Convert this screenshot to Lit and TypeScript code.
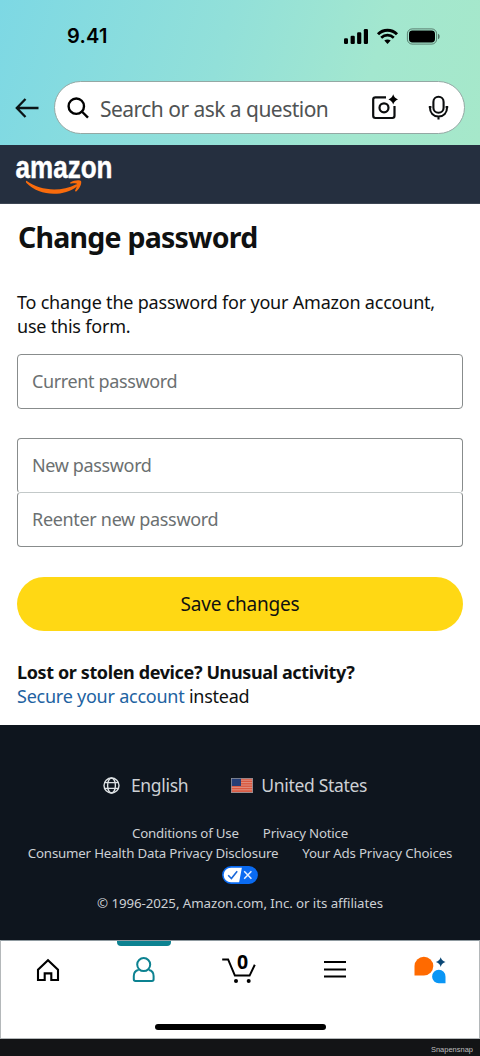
import { LitElement, html, css, svg } from "lit";
import { customElement, property } from "lit/decorators.js";

@customElement("status-bar")
class StatusBar extends LitElement {
  static styles = css`
    :host { display: flex; justify-content: space-between; align-items: center; height: 24px; padding: 24px 40px 0 67px; }
    .time { font: 600 20px/24px Inter, sans-serif; letter-spacing: 0.2px; }
    .icons { display: block; }
  `;
  render() {
    return html`
      <span class="time">9.41</span>
      <svg class="icons" width="97" height="17" viewBox="0 0 97 17">
        <rect x="1" y="10.2" width="4" height="5.8" rx="1.2" />
        <rect x="7.6" y="7.7" width="4.2" height="8.3" rx="1.2" />
        <rect x="14.1" y="4.3" width="4.2" height="11.7" rx="1.2" />
        <rect x="20.8" y="1" width="4.2" height="15" rx="1.2" />
        <path d="M35 6.2C40.4 .8 48.6 .8 54 6.2" fill="none" stroke="#000" stroke-width="3" />
        <path d="M38.2 9.8c3.7-3.5 8.9-3.5 12.6 0" fill="none" stroke="#000" stroke-width="2.7" />
        <path d="M44.5 16l-3.2-3.4c1.9-1.6 4.5-1.6 6.4 0z" />
        <rect x="64.4" y=".9" width="29.2" height="15.2" rx="4.8" fill="none" stroke="#000" stroke-opacity=".45" stroke-width="1" />
        <rect x="66" y="2.6" width="26" height="11.8" rx="3.4" />
        <path d="M95 5.8c2.2.8 2.2 4.6 0 5.4z" opacity=".5" />
      </svg>
    `;
  }
}

@customElement("search-header")
class SearchHeader extends LitElement {
  static styles = css`
    :host { display: flex; align-items: center; padding: 33px 15px 12px 15px; }
    .back { flex: none; margin: 1px 15px 0 0; }
    .pill { flex: 1; display: flex; align-items: center; box-sizing: border-box; height: 53px; border: 1px solid #94a8a4; border-radius: 27px; background: #fff; padding: 0 14px 0 11px; }
    .query { flex: 1; margin-left: 9px; color: #505354; font-size: 21px; line-height: 28px; letter-spacing: -0.53px; white-space: nowrap; padding-top: 2px; }
    .camera { margin: -2px 30px 0 0; }
    svg { display: block; flex: none; }
  `;
  render() {
    return html`
      <svg class="back" width="24" height="22" viewBox="0 0 24 22" fill="none" stroke="#0b1416" stroke-width="2.3">
        <path d="M10.5 2L1.8 11l8.7 9M2 11h21.5" />
      </svg>
      <div class="pill">
        <svg width="25" height="24" viewBox="0 0 25 24" fill="none" stroke="#000" stroke-width="2.4">
          <circle cx="10.3" cy="10.2" r="7.7" /><path d="M15.8 15.5l6.2 6.2" />
        </svg>
        <span class="query">Search or ask a question</span>
        <svg class="camera" width="28" height="28" viewBox="0 0 28 28">
          <g fill="none" stroke="#0b0d0e" stroke-width="2.2">
            <path d="M16 4.3H5.4Q3.2 4.3 3.2 6.5V22.8Q3.2 25 5.4 25H22.3Q24.5 25 24.5 22.8V13" />
            <circle cx="14" cy="14.8" r="4.5" />
          </g>
          <path d="M23.2 1.3Q24.3 5.2 28 6.4Q24.3 7.6 23.2 11.5Q22.1 7.6 18.4 6.4Q22.1 5.2 23.2 1.3Z" />
        </svg>
        <svg width="22" height="26" viewBox="0 0 22 26" fill="none" stroke="#0b0d0e" stroke-width="2.1">
          <rect x="5.4" y="1.8" width="10.2" height="16" rx="5.1" />
          <path d="M.8 12h2.6M17.6 12h2.6M1.9 12c0 6 3.6 9.5 8.6 9.5s8.6-3.5 8.6-9.5M10.5 21.5v3" />
        </svg>
      </div>
    `;
  }
}

@customElement("brand-bar")
class BrandBar extends LitElement {
  static styles = css`
    :host { display: flex; height: 59px; background: #252f3f; padding-left: 15px; box-sizing: border-box; border-bottom: 1px solid #3c4553; }
    svg { display: block; overflow: visible; }
    .word { font: 700 30.5px "Liberation Sans", sans-serif; fill: #fff; stroke: #fff; stroke-width: 0.4px; }
  `;
  render() {
    return html`
      <svg width="120" height="58" viewBox="0 0 120 58" role="img" aria-label="amazon">
        <text class="word" x="0.5" y="33.4" textLength="97" lengthAdjust="spacingAndGlyphs">amazon</text>
        <path d="M11.5 35.8C25 46 46 47 60.8 39.4C62.4 38.7 63.4 40.2 62 41.5C48 52.2 24 51.4 11.2 37.8Q10.4 35.6 11.5 35.8Z" fill="#f96b0c" />
        <path d="M55.3 37.6C58.6 34.9 65 34.5 66 36C67 37.9 65 43.6 61.5 46.2C60.5 46.9 59.7 46.3 60.3 45.1C61.4 42.6 62.7 39.8 61.9 38.9C61.1 38 58.2 38.3 56.2 38.6C55.1 38.7 54.7 38 55.3 37.6Z" fill="#f96b0c" />
      </svg>
    `;
  }
}

@customElement("password-form")
class PasswordForm extends LitElement {
  static styles = css`
    :host { display: flex; flex-direction: column; box-sizing: border-box; height: 521px; padding: 13px 17px 0; background: #fff; color: #0f1111; font-size: 18px; line-height: 24.4px; letter-spacing: -0.21px; }
    .title { margin: 0; font-size: 28.5px; line-height: 40px; font-weight: 700; letter-spacing: -0.77px; padding-left: 1px; }
    .intro { margin: 33px 0 15px; }
    .field { display: block; width: 100%; box-sizing: border-box; height: 55px; border: 1px solid #888c8c; border-radius: 4px; padding: 0 14px; background: #fff; font: inherit; letter-spacing: -0.36px; outline: none; }
    .field::placeholder { color: #6b7071; opacity: 1; }
    .pair { display: flex; flex-direction: column; margin: 29px 0 30px; }
    .first { border-bottom-color: transparent; }
    .second { margin-top: -1px; border-top-color: #c3c9c9; letter-spacing: -0.32px; }
    .save { height: 54px; border: 0; border-radius: 27px; background: #ffd814; color: #0f1111; font: inherit; font-size: 19px; letter-spacing: -0.2px; padding: 1px 0 0; }
    .help { margin: 29px 0 0; letter-spacing: -0.24px; }
    .strong { display: block; font-weight: 700; letter-spacing: -0.38px; }
    .link { color: #2162a1; }
  `;
  render() {
    return html`
      <h1 class="title">Change password</h1>
      <p class="intro">To change the password for your Amazon account,<br />use this form.</p>
      <input class="field" type="password" placeholder="Current password" />
      <div class="pair">
        <input class="field first" type="password" placeholder="New password" />
        <input class="field second" type="password" placeholder="Reenter new password" />
      </div>
      <button class="save">Save changes</button>
      <p class="help"><b class="strong">Lost or stolen device? Unusual activity?</b><a class="link">Secure your account</a> instead</p>
    `;
  }
}

@customElement("site-footer")
class SiteFooter extends LitElement {
  static styles = css`
    :host { display: flex; flex-direction: column; align-items: center; box-sizing: border-box; height: 215px; background: #0e151e; color: #ccd0d4; padding-top: 48px; font-size: 13.3px; line-height: 19.5px; letter-spacing: -0.2px; }
    .locale { display: flex; align-items: center; font-size: 17.5px; line-height: 24px; letter-spacing: -0.32px; margin-right: 10px; }
    .globe { margin-right: 11px; }
    .flag { margin: 0 8px 0 43px; }
    .links { display: flex; gap: 24px; white-space: nowrap; }
    .top { margin-top: 27px; }
    .choice { margin: 3px 0 10px; }
    .copy { letter-spacing: -0.07px; }
    svg { display: block; }
  `;
  render() {
    return html`
      <div class="locale">
        <svg class="globe" width="17" height="17" viewBox="0 0 17 17" fill="none" stroke="#dce0e3" stroke-width="1.4">
          <circle cx="8.5" cy="8.5" r="7.5" /><ellipse cx="8.5" cy="8.5" rx="3.9" ry="7.5" />
          <path d="M1.8 5.6h13.4M1.8 11.4h13.4" />
        </svg>
        <span>English</span>
        <svg class="flag" width="22" height="15" viewBox="0 0 22 15">
          <rect width="22" height="15" fill="#d9583f" />
          <path d="M0 2.2h22M0 4.6h22M0 7h22M0 9.4h22M0 11.8h22M0 14.4h22" stroke="#e3a79d" stroke-width=".7" />
          <rect width="10" height="8" fill="#263e76" />
          <rect x=".4" y=".4" width="21.2" height="14.2" fill="none" stroke="#8d8f98" stroke-width=".8" />
        </svg>
        <span>United States</span>
      </div>
      <div class="links top"><a>Conditions of Use</a><a>Privacy Notice</a></div>
      <div class="links"><a>Consumer Health Data Privacy Disclosure</a><a>Your Ads Privacy Choices</a></div>
      <svg class="choice" width="36" height="18" viewBox="0 0 36 18">
        <rect x=".9" y=".9" width="34.2" height="16.2" rx="8.1" fill="#fff" stroke="#0a6bf2" stroke-width="1.6" />
        <path d="M20 1H27a8 8 0 0 1 0 16H17z" fill="#0a6bf2" />
        <path d="M6.2 9.3l3.2 3.2 5.8-7.2" fill="none" stroke="#1a68da" stroke-width="1.6" />
        <path d="M22.2 5.2l7.2 7.6M29.4 5.2l-7.2 7.6" stroke="#e8f1ff" stroke-width="1.5" />
      </svg>
      <span class="copy">© 1996-2025, Amazon.com, Inc. or its affiliates</span>
    `;
  }
}

const ICONS: Record<string, unknown> = {
  home: svg`<path d="M10 23V12.7L20 3.2l10 9.5V23h-6.7v-6.6h-6.6V23z" fill="none" stroke="#000" stroke-width="2.1" />`,
  user: svg`<g fill="none" stroke="#0c8291" stroke-width="2"><circle cx="19.7" cy="7.6" r="6.5" /><path d="M14.6 13c-3.2.6-4.8 2.8-4.8 6v3.3q0 1.7 1.7 1.7h16.4q1.7 0 1.7-1.7V19c0-3.2-1.6-5.4-4.8-6" /></g>`,
  cart: svg`<path d="M3.2 2.4h5.9l6.8 16.2H30.6l5.2-10.8" fill="none" stroke="#000" stroke-width="2" /><circle cx="17" cy="24" r="2" /><circle cx="29.7" cy="24" r="2" /><text class="count" x="23.5" y="12" text-anchor="middle">0</text>`,
  menu: svg`<path d="M9 5h22M9 12.4h22M9 19.6h22" stroke="#000" stroke-width="2" />`,
  rufus: svg`<path d="M3.5 18.5V9.1a9.4 9.4 0 1 1 9.4 9.4z" fill="#ff6a00" /><path d="M34.5 26.2h-6.4a6.7 6.7 0 1 1 6.4-6.5z" fill="#0a96f5" /><path d="M29.7.3Q30.8 4 34.5 5.1Q30.8 6.2 29.7 9.9Q28.6 6.2 24.9 5.1Q28.6 4 29.7.3Z" fill="#0b4775" />`,
};

@customElement("tab-item")
class TabItem extends LitElement {
  @property() icon = "home";
  static styles = css`
    :host { display: flex; flex-direction: column; align-items: center; }
    .mark { width: 54px; height: 5px; border-radius: 0 0 4px 4px; }
    :host([active]) .mark { background: #0c8291; }
    svg { display: block; margin-top: 11px; overflow: visible; }
    .count { font: 700 19.5px "Noto Sans", sans-serif; }
  `;
  render() {
    return html`<span class="mark"></span><svg width="40" height="28" viewBox="0 0 40 28">${ICONS[this.icon]}</svg>`;
  }
}

@customElement("tab-bar")
class TabBar extends LitElement {
  static styles = css`
    :host { display: flex; flex-direction: column; box-sizing: border-box; height: 99px; border: 1px solid #b4b8ba; border-top-color: #8f9aa0; background: #fff; }
    .tabs { display: grid; grid-template-columns: repeat(5, 95.7px); margin-left: -1px; height: 83px; }
    .home { width: 171px; height: 6px; border-radius: 3px; background: #000; align-self: center; }
  `;
  render() {
    return html`
      <nav class="tabs">
        <tab-item icon="home"></tab-item>
        <tab-item icon="user" active></tab-item>
        <tab-item icon="cart"></tab-item>
        <tab-item icon="menu"></tab-item>
        <tab-item icon="rufus"></tab-item>
      </nav>
      <span class="home"></span>
    `;
  }
}

@customElement("app-root")
class AppRoot extends LitElement {
  static styles = css`
    :host { display: block; width: 480px; height: 1056px; overflow: hidden; background: #131416; font-family: "Noto Sans", sans-serif; }
    .top { height: 145px; background: linear-gradient(107deg, #7dd8e4 0%, #92e0d9 45%, #a3e7cf 75%, #a6e8ca 100%); }
    .credit { display: block; padding-right: 7px; text-align: right; font: 7.5px/21px "Liberation Sans", sans-serif; color: #bdbdbf; }
  `;
  render() {
    return html`
      <header class="top"><status-bar></status-bar><search-header></search-header></header>
      <brand-bar></brand-bar>
      <password-form></password-form>
      <site-footer></site-footer>
      <tab-bar></tab-bar>
      <span class="credit">Snapensnap</span>
    `;
  }
}
